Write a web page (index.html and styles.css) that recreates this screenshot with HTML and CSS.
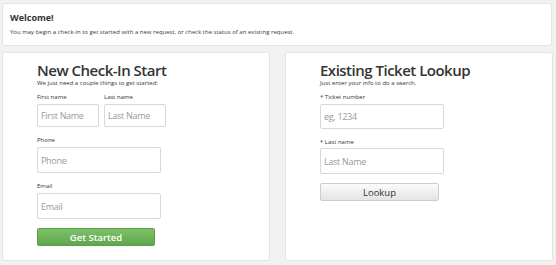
FILE: index.html
```html
<!DOCTYPE html>
<html>
<head>
<meta charset="utf-8">
<link rel="stylesheet" href="styles.css">
</head>
<body>
<div class="page">
  <div class="card welcome">
    <div class="welcome-title">Welcome!</div>
    <div class="welcome-text">You may begin a check-in to get started with a new request, or check the status of an existing request.</div>
  </div>
  <div class="row">
    <div class="card panel">
      <h1 class="heading">New Check-In Start</h1>
      <div class="sub">We just need a couple things to get started:</div>
      <div class="pair">
        <div class="field first">
          <label class="label">First name</label>
          <input class="input small" placeholder="First Name">
        </div>
        <div class="field first">
          <label class="label">Last name</label>
          <input class="input small" placeholder="Last Name">
        </div>
      </div>
      <div class="field">
        <label class="label">Phone</label>
        <input class="input wide" placeholder="Phone">
      </div>
      <div class="field">
        <label class="label">Email</label>
        <input class="input wide" placeholder="Email">
      </div>
      <button class="btn green">Get Started</button>
    </div>
    <div class="card panel">
      <h1 class="heading">Existing Ticket Lookup</h1>
      <div class="sub">Just enter your info to do a search.</div>
      <div class="field first">
        <label class="label">* Ticket number</label>
        <input class="input wide ticket" placeholder="eg, 1234">
      </div>
      <div class="field">
        <label class="label tight">* Last name</label>
        <input class="input wide" placeholder="Last Name">
      </div>
      <button class="btn gray">Lookup</button>
    </div>
  </div>
</div>
</body>
</html>
```
FILE: styles.css
```css
* { box-sizing: border-box; }
html, body { margin: 0; padding: 0; }
body {
  background: #f1f1f1;
  font-family: "Open Sans", "Liberation Sans", sans-serif;
  color: #333;
  width: 556px;
  height: 265px;
  overflow: hidden;
}
.page {
  padding: 3px 3px 0 2px;
}
.card {
  background: #fff;
  border: 1px solid #e4e4e4;
  border-radius: 3px;
}
.welcome {
  height: 43px;
  width: 550px;
  padding: 8px 0 0 7px;
}
.welcome-title {
  font-weight: 700;
  font-size: 9px;
  line-height: 12px;
  color: #333;
}
.welcome-text {
  font-size: 6px;
  line-height: 10px;
  margin-top: 3px;
  color: #3a3a3a;
}
.row {
  display: flex;
  gap: 15px;
  margin-top: 6px;
}
.panel {
  width: 268px;
  height: 209px;
  padding: 9px 0 0 34px;
}
.heading {
  margin: 0;
  font-size: 15px;
  font-weight: 600;
  letter-spacing: -0.5px;
  line-height: 16px;
  color: #333;
}
.sub {
  font-size: 6px;
  line-height: 8px;
  margin-top: 1px;
  color: #333;
}
.pair {
  display: flex;
  gap: 5px;
}
.field {
  display: flex;
  flex-direction: column;
  margin-top: 9px;
}
.field.first {
  margin-top: 6px;
}
.label {
  font-size: 6px;
  line-height: 8px;
  margin-bottom: 3px;
  color: #333;
}
.label.tight {
  margin-bottom: 2px;
}
.input {
  font-family: "Open Sans", "Liberation Sans", sans-serif;
  font-size: 9px;
  letter-spacing: -0.3px;
  height: 26px;
  border: 1px solid #d8d8d8;
  border-radius: 2px;
  padding: 0 3px;
  background: #fff;
  outline: none;
}
.input::placeholder { color: #999; }
.input.small { width: 62px; height: 23px; }
.input.wide { width: 124px; }
.input.ticket { height: 25px; }
.btn {
  display: block;
  font-family: "Open Sans", "Liberation Sans", sans-serif;
  font-size: 9.5px;
  height: 18px;
  border-radius: 2px;
  margin-top: 9px;
  padding: 0;
}
.btn.green {
  width: 118px;
  color: #fff;
  font-weight: 600;
  background: linear-gradient(#7ec26b, #5fa64c);
  border: 1px solid #5a9e48;
}
.btn.gray {
  width: 119px;
  color: #333;
  background: linear-gradient(#fbfbfb, #e4e4e4);
  border: 1px solid #cdcdcd;
}
```
